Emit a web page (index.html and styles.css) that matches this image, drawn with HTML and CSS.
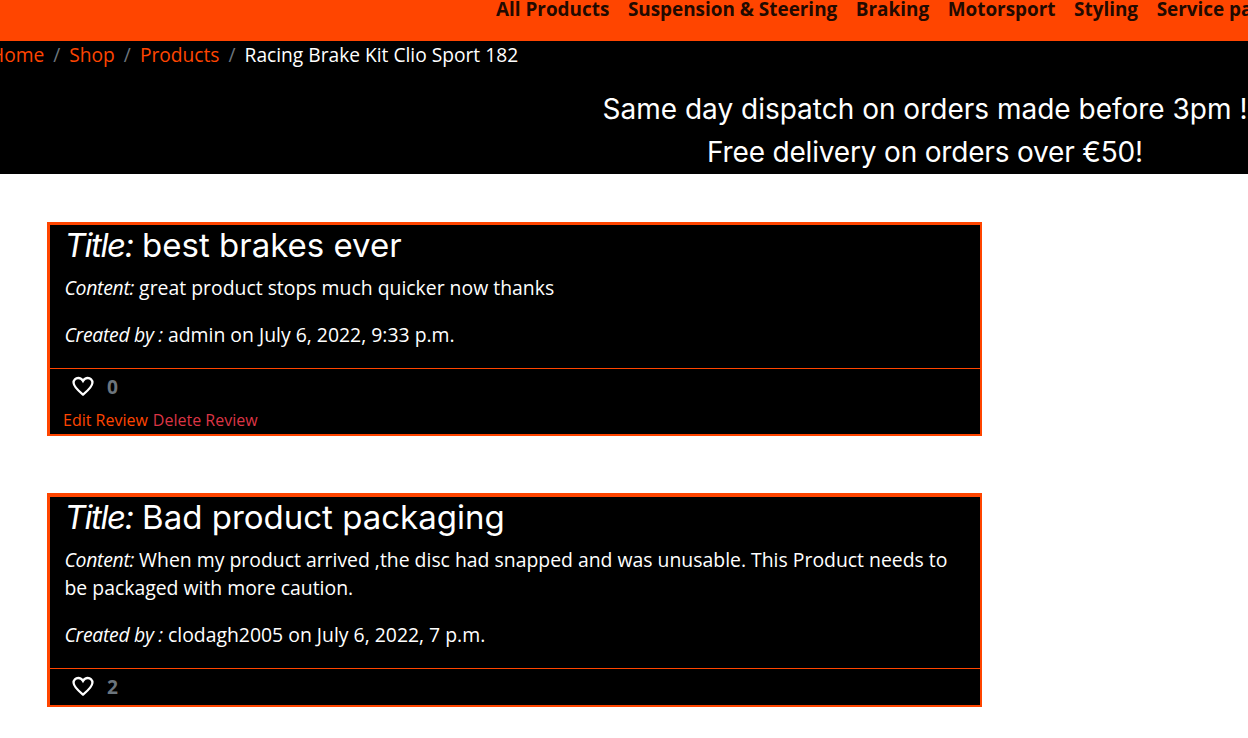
FILE: index.html
```html
<!doctype html>
<html lang='en'>
<head>
<meta charset='UTF-8'>
<title>Racing Brake Kit Clio Sport 182</title>
<meta name="viewport" content="width=device-width, initial-scale=1.0">
<link rel="stylesheet" href="styles.css">
</head>
<body>
<nav class='topnav'>
  <a href='#'>All Products</a>
  <a href='#'>Suspension &amp; Steering</a>
  <a href='#'>Braking</a>
  <a href='#'>Motorsport</a>
  <a href='#'>Styling</a>
  <a href='#'>Service parts</a>
</nav>

<div class='banner'>
  <ol class='crumbs'>
    <li><a href='#'>Home</a></li>
    <li class='sep'>/</li>
    <li><a href='#'>Shop</a></li>
    <li class='sep'>/</li>
    <li><a href='#'>Products</a></li>
    <li class='sep'>/</li>
    <li class='current'>Racing Brake Kit Clio Sport 182</li>
  </ol>
  <p class='promo promo-first'>Same day dispatch on orders made before 3pm !</p>
  <p class='promo promo-second'>Free delivery on orders over €50!</p>
</div>

<main class='reviews'>
  <article class='review'>
    <div class='review-body'>
      <h3><em>Title:</em> best brakes ever</h3>
      <p class='content'><em>Content:</em> great product stops much quicker now thanks</p>
      <p class='byline'><em>Created by :</em> admin on July 6, 2022, 9:33 p.m.</p>
    </div>
    <div class='review-foot'>
      <div class='likes'>
        <svg class='heart' viewBox='0 0 24 24' width='24' height='24'><path d='M12 20.5 C 9 18 3 13.5 2.6 9 C 2.3 5.8 4.8 4 7.2 4 C 9.3 4 11 5.2 12 7 C 13 5.2 14.7 4 16.8 4 C 19.2 4 21.7 5.8 21.4 9 C 21 13.5 15 18 12 20.5 Z'/></svg>
        <span class='count'>0</span>
      </div>
      <div class='actions'>
        <a class='edit' href='#'>Edit Review</a>
        <a class='delete' href='#'>Delete Review</a>
      </div>
    </div>
  </article>

  <article class='review'>
    <div class='review-body'>
      <h3><em>Title:</em> Bad product packaging</h3>
      <p class='content'><em>Content:</em> When my product arrived ,the disc had snapped and was unusable. This Product needs to be packaged with more caution.</p>
      <p class='byline'><em>Created by :</em> clodagh2005 on July 6, 2022, 7 p.m.</p>
    </div>
    <div class='review-foot'>
      <div class='likes'>
        <svg class='heart' viewBox='0 0 24 24' width='24' height='24'><path d='M12 20.5 C 9 18 3 13.5 2.6 9 C 2.3 5.8 4.8 4 7.2 4 C 9.3 4 11 5.2 12 7 C 13 5.2 14.7 4 16.8 4 C 19.2 4 21.7 5.8 21.4 9 C 21 13.5 15 18 12 20.5 Z'/></svg>
        <span class='count'>2</span>
      </div>
    </div>
  </article>
</main>
</body>
</html>
```

FILE: styles.css
```css
html, body {
  overflow: hidden;
}
body {
  margin: 0;
  height: 738px;
  background: #fff;
  font-family: "Open Sans", sans-serif;
  font-size: 19.2px;
  color: #fff;
}
a {
  text-decoration: none;
}
p {
  margin: 0;
}
.topnav {
  display: flex;
  gap: 18.6px;
  height: 41px;
  padding-left: 496px;
  background: #ff4500;
  white-space: nowrap;
  overflow: hidden;
}
.topnav a {
  margin-top: -5px;
  line-height: 28px;
  font-size: 18.9px;
  font-weight: 700;
  color: #220a00;
  flex-shrink: 0;
}
.banner {
  height: 133px;
  background: #000;
}
.crumbs {
  display: flex;
  gap: 9px;
  margin: 0 0 0 -10px;
  padding: 0;
  list-style: none;
  line-height: 28px;
  white-space: nowrap;
}
.crumbs a {
  color: #ff4500;
}
.crumbs .sep {
  color: #6c757d;
}
.promo {
  padding-left: 602px;
  width: 646px;
  margin: 0;
  text-align: center;
  font-family: "Inter", sans-serif;
  font-size: 28px;
  line-height: 43px;
  white-space: nowrap;
}
.promo-first {
  margin-top: 19px;
}
.promo-second {
  letter-spacing: -0.18px;
}
.reviews {
  display: flex;
  flex-direction: column;
  gap: 57px;
  width: 935px;
  margin: 48px 0 0 47px;
}
.review {
  background: #000;
  border: 3px solid #ff4500;
  border-width: 3px 2px 2px 3px;
}
.review + .review {
  border-top-width: 4px;
}
.review-body {
  padding: 0 15px 19px 14.5px;
  border-bottom: 1px solid #ff4500;
}
.review-body h3 {
  margin: 0 0 8px;
  font-family: "Inter", sans-serif;
  font-weight: 400;
  font-size: 33px;
  line-height: 41px;
}
.review-body h3 em {
  letter-spacing: -1.4px;
}
.content {
  margin-bottom: 19px;
  line-height: 28px;
  font-size: 19.4px;
}
.byline {
  line-height: 28px;
  font-size: 19.4px;
}
.review-body p em {
  letter-spacing: -0.3px;
}
.review-foot {
  padding: 0 14px 0 13px;
}
.likes {
  display: flex;
  align-items: center;
  gap: 12px;
  height: 34px;
  margin-bottom: 2px;
  padding-left: 8px;
}
.heart {
  fill: none;
  stroke: #fff;
  stroke-width: 2.3;
}
.count {
  font-weight: 700;
  font-size: 19.2px;
  color: #6c757d;
}
.actions {
  display: flex;
  gap: 5px;
  margin-top: -1px;
  font-size: 16px;
  line-height: 28px;
  height: 28px;
  padding-top: 2px;
}
.edit {
  color: #ff4500;
}
.delete {
  color: #dc3545;
}
```
